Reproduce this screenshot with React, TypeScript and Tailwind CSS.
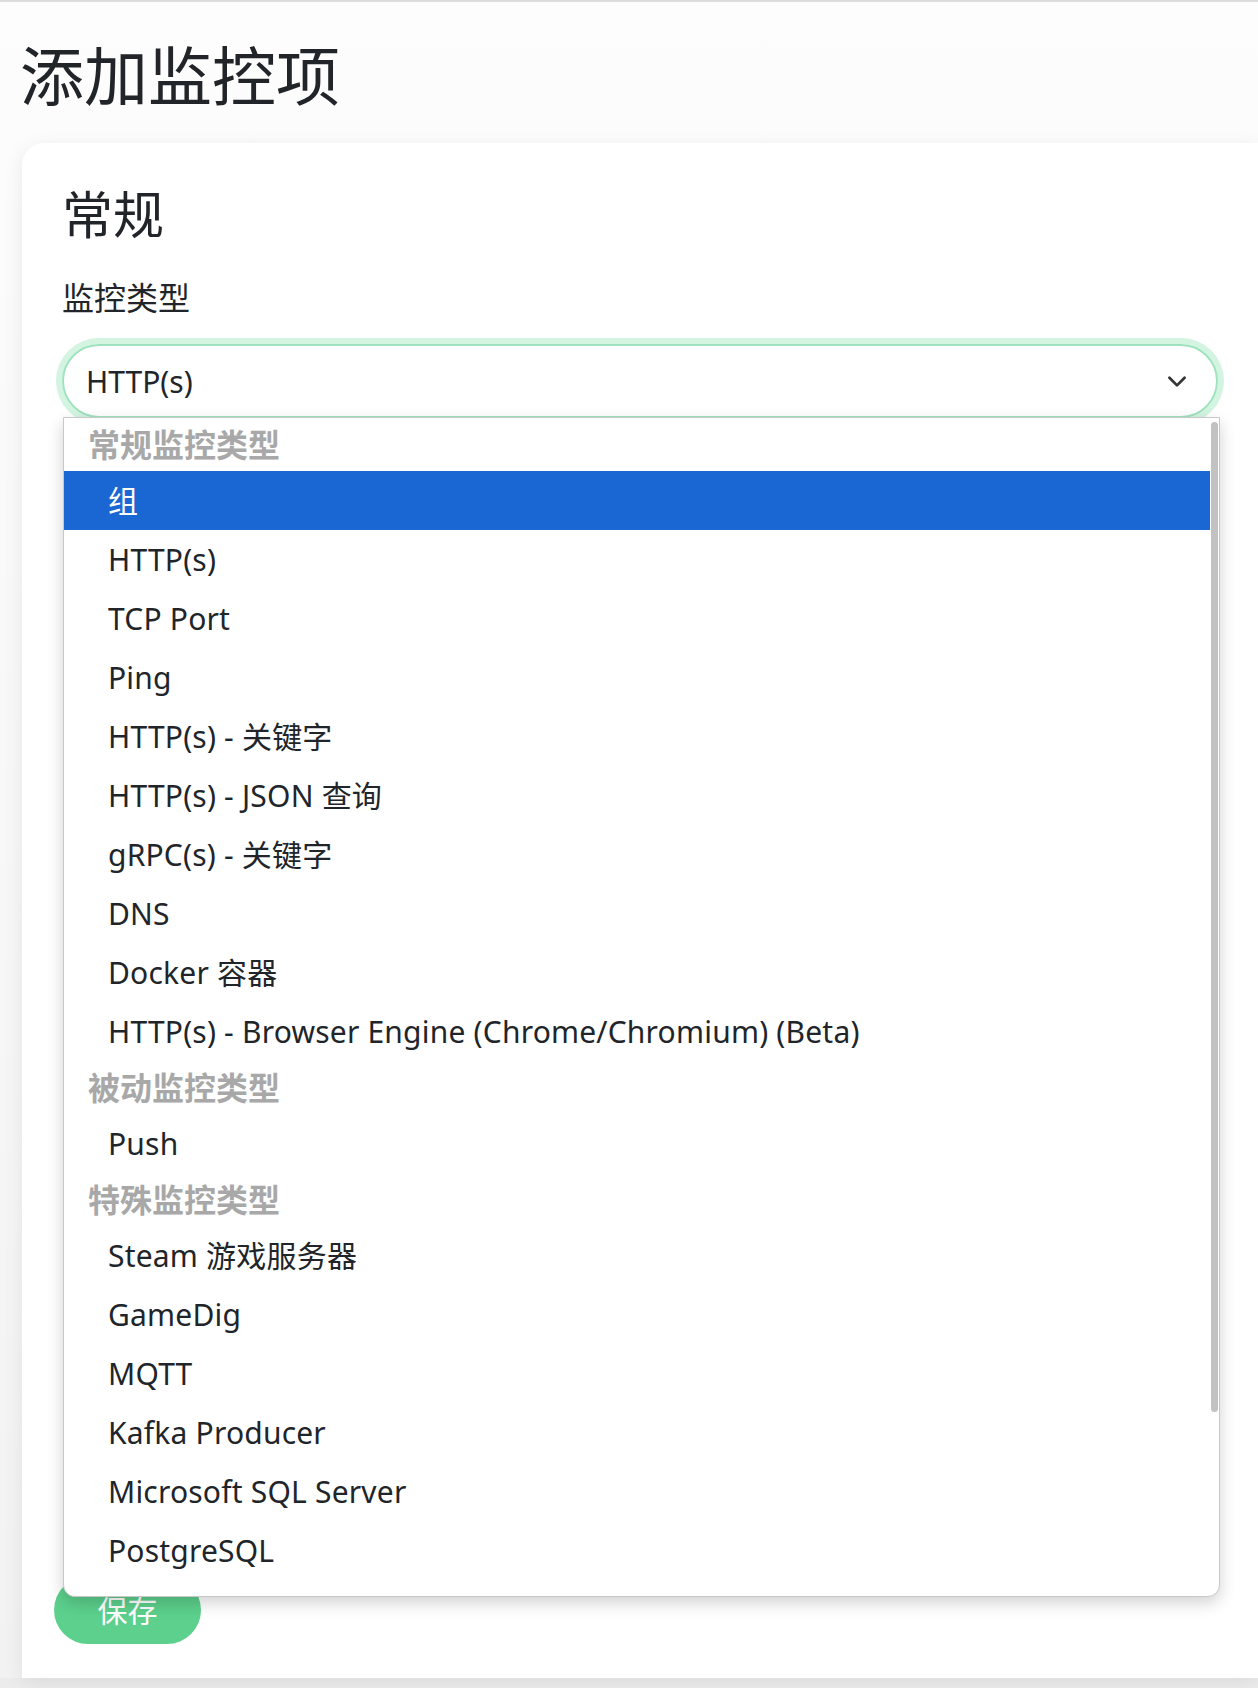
import React from "react";

const F = { fontFamily: '"Noto Sans", "Noto Sans CJK SC", sans-serif' };

type Row = { h?: string; t?: string; sel?: boolean };
const rows: Row[] = [
  { h: "常规监控类型" },
  { t: "组", sel: true },
  { t: "HTTP(s)" },
  { t: "TCP Port" },
  { t: "Ping" },
  { t: "HTTP(s) - 关键字" },
  { t: "HTTP(s) - JSON 查询" },
  { t: "gRPC(s) - 关键字" },
  { t: "DNS" },
  { t: "Docker 容器" },
  { t: "HTTP(s) - Browser Engine (Chrome/Chromium) (Beta)" },
  { h: "被动监控类型" },
  { t: "Push" },
  { h: "特殊监控类型" },
  { t: "Steam 游戏服务器" },
  { t: "GameDig" },
  { t: "MQTT" },
  { t: "Kafka Producer" },
  { t: "Microsoft SQL Server" },
  { t: "PostgreSQL" },
];

export default function App() {
  return (
    <div style={F} className="w-[1258px] h-[1688px] overflow-hidden bg-[#ececec] text-[#212529]">
      <div className="h-[2px] bg-[#dcdcdc]" />
      <div className="h-[1676px] bg-gradient-to-b from-[#fdfdfd] to-[#f2f2f2] flex flex-col">
        <h1 className="text-[64px] leading-none pl-[20px] pt-[42px] h-[141px] font-normal">添加监控项</h1>
        <div className="relative flex-1 ml-[22px] bg-white rounded-tl-[22px] shadow-[0_4px_20px_rgba(0,0,0,0.08)] pl-[40px] pt-[46px]">
          <h2 className="text-[51px] leading-none font-normal">常规</h2>
          <div className="text-[32px] leading-none mt-[42px]">监控类型</div>
          <div className="mt-[30px] w-[1156px] rounded-full ring-[6px] ring-[#d2f4e1]">
            <div className="h-[74px] rounded-full border-2 border-[#9ee3bd] bg-white flex items-center justify-between pl-[22px] pr-[26px]">
              <span className="text-[30px]">HTTP(s)</span>
              <svg width="26" height="26" viewBox="0 0 24 24" fill="none" stroke="#333" strokeWidth="2.5" strokeLinecap="round" strokeLinejoin="round"><path d="M5 9l7 7 7-7" /></svg>
            </div>
          </div>
          <div className="absolute left-[32px] top-[1433px] w-[147px] h-[68px] rounded-full bg-[#5cd08c] text-white text-[30px] flex items-center justify-center">保存</div>
          <div className="absolute left-[41px] top-[274px] w-[1157px] h-[1180px] bg-white rounded-b-[12px] border border-[#c8c8c8] shadow-[0_6px_16px_rgba(0,0,0,0.18)] overflow-hidden flex">
            <div className="flex-1 flex flex-col">
              {rows.map((r, i) =>
                r.h ? (
                  <div key={i} className="h-[53px] flex items-center pl-[24px] text-[32px] font-bold text-[#a8a8a8]">{r.h}</div>
                ) : (
                  <div key={i} className={`h-[59px] flex items-center pl-[44px] text-[30px] tracking-[0.2px] ${r.sel ? "bg-[#1a66d2] text-white" : "text-[#212529]"}`}>{r.t}</div>
                )
              )}
            </div>
            <div className="w-[9px] flex justify-center pt-[4px]">
              <div className="w-[7px] h-[990px] rounded-full bg-[#c2c2c2]" />
            </div>
          </div>
        </div>
      </div>
    </div>
  );
}
